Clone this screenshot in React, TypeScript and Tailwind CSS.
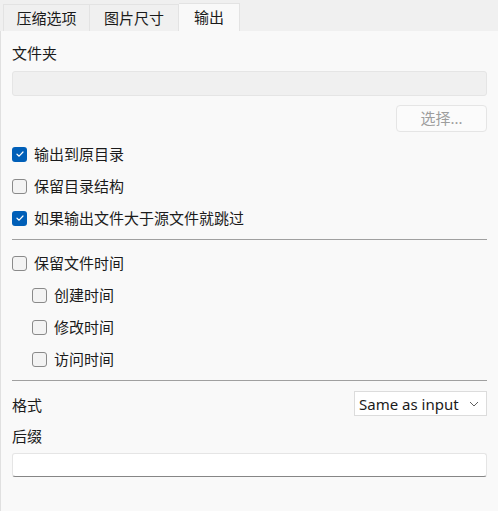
import React from "react";

const font = { fontFamily: '"Noto Sans", "Noto Sans CJK SC", sans-serif' };

function Check({ checked }: { checked?: boolean }) {
  if (checked) {
    return (
      <span className="flex h-[15px] w-[15px] shrink-0 items-center justify-center rounded-[3px] bg-[#005fb8]">
        <svg width="10" height="10" viewBox="0 0 10 10" fill="none">
          <path d="M2 5.2 L4.1 7.2 L8 3" stroke="#ffffff" strokeWidth="1.2" strokeLinecap="round" strokeLinejoin="round" />
        </svg>
      </span>
    );
  }
  return <span className="h-[15px] w-[15px] shrink-0 rounded-[3px] border border-[#8a8a8a] bg-[#f3f3f3]" />;
}

function Row({ label, checked, indent }: { label: string; checked?: boolean; indent?: boolean }) {
  return (
    <div className={`flex h-[32px] items-center gap-[7px] ${indent ? "pl-[20px]" : ""}`}>
      <Check checked={checked} />
      <span className="text-[15px] leading-[20px] text-[#1b1b1b]">{label}</span>
    </div>
  );
}

export default function App() {
  return (
    <div className="flex h-[511px] w-[498px] flex-col bg-[#f0f0f0]" style={font}>
      <div className="flex h-[31px] shrink-0 items-end pl-[3px]">
        <div className="flex h-[27px] w-[87px] items-center justify-center border border-b-0 border-[#e3e3e3] text-[15px] text-[#1b1b1b]">
          压缩选项
        </div>
        <div className="flex h-[27px] w-[89px] items-center justify-center border border-b-0 border-l-0 border-[#e3e3e3] text-[15px] text-[#1b1b1b]">
          图片尺寸
        </div>
        <div className="flex h-[28px] w-[61px] items-center justify-center border border-b-0 border-l-0 border-[#e3e3e3] bg-[#f9f9f9] text-[15px] text-[#1b1b1b]">
          输出
        </div>
      </div>
      <div className="flex flex-1 flex-col border-l border-[#e0e0e0] bg-[#f9f9f9] px-[11px] pt-[12px]">
        <div className="h-[20px] text-[15px] leading-[20px] text-[#1b1b1b]">文件夹</div>
        <div className="mt-[8px] h-[25px] rounded-[3px] border border-[#e5e5e5] bg-[#f0f0f0]" />
        <div className="mt-[9px] flex justify-end">
          <div className="flex h-[27px] w-[91px] items-center justify-center rounded-[4px] border border-[#e5e5e5] bg-[#fbfbfb] text-[15px] text-[#9d9d9d]">
            选择...
          </div>
        </div>
        <div className="mt-[6px]">
          <Row label="输出到原目录" checked />
          <Row label="保留目录结构" />
          <Row label="如果输出文件大于源文件就跳过" checked />
        </div>
        <div className="mt-[5px] h-px bg-[#a0a0a0]" />
        <div className="mt-[7px]">
          <Row label="保留文件时间" />
          <Row label="创建时间" indent />
          <Row label="修改时间" indent />
          <Row label="访问时间" indent />
        </div>
        <div className="mt-[5px] h-px bg-[#a0a0a0]" />
        <div className="mt-[10px] flex h-[25px] items-center justify-between">
          <span className="pt-[2px] text-[15px] leading-[20px] text-[#1b1b1b]">格式</span>
          <div className="flex h-[25px] w-[133px] items-center justify-between border border-[#dcdcdc] bg-white pl-[4px] pr-[7px]">
            <span className="text-[15px] leading-[20px] text-[#1b1b1b]">Same as input</span>
            <svg width="10" height="6" viewBox="0 0 10 6" fill="none">
              <path d="M1 1 L5 5 L9 1" stroke="#5f5f5f" strokeWidth="1" />
            </svg>
          </div>
        </div>
        <div className="mt-[10px] h-[20px] text-[15px] leading-[20px] text-[#1b1b1b]">后缀</div>
        <div className="mt-[7px] h-[24px] rounded-[3px] border border-[#e5e5e5] border-b-[#868686] bg-white" />
      </div>
    </div>
  );
}
